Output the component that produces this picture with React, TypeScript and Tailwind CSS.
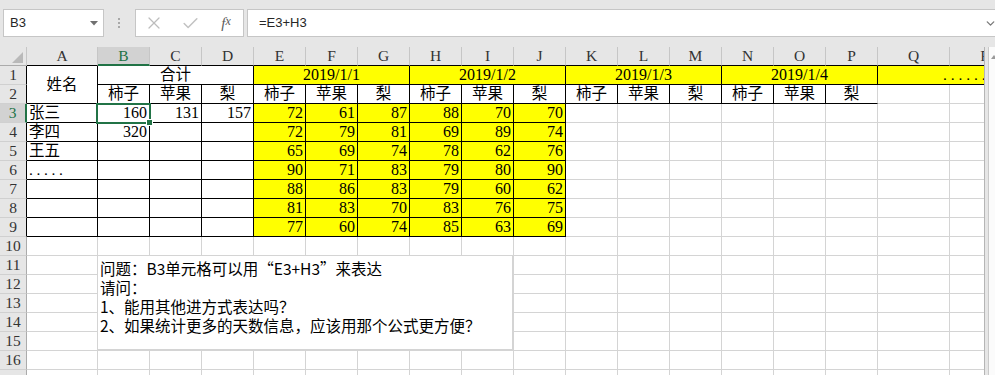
import { X, Check, ChevronDown } from 'lucide-react';
import clsx from 'clsx';

// Spreadsheet snapshot: formula bar + sheet with a merged-header fruit table

const COLS = ['A', 'B', 'C', 'D', 'E', 'F', 'G', 'H', 'I', 'J', 'K', 'L', 'M', 'N', 'O', 'P', 'Q', 'R'];
const FRUITS = ['柿子', '苹果', '梨'];
const DATES = ['2019/1/1', '2019/1/2', '2019/1/3', '2019/1/4'];
const NAMES = ['张三', '李四', '王五', '.....', '', '', ''];
const TOTALS: number[][] = [[160, 131, 157], [320], [], [], [], [], []];
const DAILY = [
    [72, 61, 87, 88, 70, 70],
    [72, 79, 81, 69, 89, 74],
    [65, 69, 74, 78, 62, 76],
    [90, 71, 83, 79, 80, 90],
    [88, 86, 83, 79, 60, 62],
    [81, 83, 70, 83, 76, 75],
    [77, 60, 74, 85, 63, 69],
];
const ROW_COUNT = 17;

interface Cell {
    text?: string | number;
    span?: 2 | 3;
    tall?: boolean;
    align?: 'left' | 'center' | 'right';
    yellow?: boolean;
    // numbers / dates are set a touch larger
    digits?: boolean;
    // black right / bottom border
    edgeR?: boolean;
    edgeB?: boolean;
    extra?: string;
}

function buildRow(r: number): Cell[] {
    if (r === 1) {
        return [
            { text: '姓名', tall: true, align: 'center', edgeR: true, edgeB: true },
            { text: '合计', span: 3, align: 'center', edgeR: true, edgeB: true },
            ...DATES.map((d): Cell => ({
                text: d,
                span: 3,
                align: 'center',
                yellow: true,
                digits: true,
                edgeR: true,
                edgeB: true,
            })),
            { text: '............', span: 2, yellow: true, edgeB: true, extra: 'pl-[65px] tracking-[3.9px]' },
        ];
    }
    if (r === 2) {
        const cells: Cell[] = [];
        for (let i = 0; i < 15; i++) {
            cells.push({ text: FRUITS[i % 3], align: 'center', edgeR: i < 14, edgeB: true });
        }
        cells.push({}, {});
        return cells;
    }
    if (r <= 9) {
        const i = r - 3;
        const cells: Cell[] = [
            {
                text: NAMES[i],
                align: 'left',
                edgeR: true,
                edgeB: true,
                extra: NAMES[i] === '.....' ? 'tracking-[3.6px]' : '',
            },
        ];
        for (let c = 0; c < 3; c++) {
            cells.push({ text: TOTALS[i][c], align: 'right', digits: true, edgeR: true, edgeB: true });
        }
        DAILY[i].forEach(v =>
            cells.push({ text: v, align: 'right', yellow: true, digits: true, edgeR: true, edgeB: true })
        );
        for (let c = 0; c < 8; c++) cells.push({});
        return cells;
    }
    return COLS.map(() => ({}));
}

function CellView({ cell }: { cell: Cell }) {
    return (
        <div
            className={clsx(
                'flex min-w-0 overflow-hidden whitespace-nowrap border-r border-b px-[2px] leading-[18px] text-black',
                cell.digits ? 'text-[16px]' : 'text-[15.5px]',
                cell.span === 3 && 'col-span-3',
                cell.span === 2 && 'col-span-2',
                cell.tall ? 'row-span-2 items-center' : 'items-end',
                cell.align === 'center' && 'justify-center',
                cell.align === 'right' && 'justify-end',
                cell.yellow ? 'bg-[#ffff00]' : 'bg-white',
                cell.edgeR ? 'border-r-black' : 'border-r-[#d4d4d4]',
                cell.edgeB ? 'border-b-black' : 'border-b-[#d4d4d4]',
                cell.extra
            )}
        >
            {cell.text}
        </div>
    );
}

function FormulaBar() {
    return (
        <div className="flex h-[47px] items-start bg-[#e6e6e6] pt-[9px] pl-[3px] font-['Liberation_Sans',sans-serif]">
            {/* Name box */}
            <div className="flex h-[28px] w-[101px] shrink-0 items-center justify-between border border-[#c6c6c6] bg-white pl-[6px] pr-[5px] text-[13px] text-[#262626]">
                <span>B3</span>
                <svg width="8" height="5" viewBox="0 0 8 5">
                    <polygon points="0,0 8,0 4,4.5" fill="#707070" />
                </svg>
            </div>

            {/* Grip dots */}
            <div className="ml-[14px] mt-[9px] flex shrink-0 flex-col gap-[2px]">
                <span className="h-[2px] w-[2px] bg-[#a8a8a8]" />
                <span className="h-[2px] w-[2px] bg-[#a8a8a8]" />
                <span className="h-[2px] w-[2px] bg-[#a8a8a8]" />
            </div>

            {/* Cancel / enter / fx */}
            <div className="ml-[15px] flex h-[28px] w-[109px] shrink-0 items-center border border-[#c6c6c6] bg-white">
                <div className="flex w-[35px] justify-center">
                    <X size={20} strokeWidth={1.5} color="#bdbdbd" />
                </div>
                <div className="flex w-[38px] justify-center">
                    <Check size={19} strokeWidth={1.9} color="#c2c2c2" />
                </div>
                <div className="flex w-[34px] justify-center font-['Liberation_Serif',serif] text-[15px] italic text-[#5a5a5a]">
                    f<span className="text-[12px] leading-[18px]">x</span>
                </div>
            </div>

            {/* Formula input */}
            <div className="ml-[3px] flex h-[28px] w-[760px] shrink-0 items-center justify-between border border-[#c6c6c6] bg-white pl-[11px] pr-[9px] text-[13px] text-[#262626]">
                <span>=E3+H3</span>
                <ChevronDown size={13} strokeWidth={2.5} color="#7a7a7a" />
            </div>
        </div>
    );
}

export default function App() {
    return (
        <div className="h-[375px] w-[995px] overflow-hidden bg-[#e6e6e6] font-['Liberation_Serif','Noto_Sans_CJK_SC',serif]">
            <FormulaBar />

            <div className="flex h-[328px]">
                {/* Sheet */}
                <div className="relative h-full w-[985px] shrink-0 overflow-hidden border-r border-[#b5b5b5]">
                    <div className="grid w-max auto-rows-[19px] grid-cols-[27px_71px_repeat(15,52px)_72px_72px]">
                        {/* Corner */}
                        <div className="relative border-r border-b border-r-[#c6c6c6] border-b-[#ababab] bg-[#e6e6e6]">
                            <svg className="absolute right-[3px] bottom-[2px]" width="11" height="11" viewBox="0 0 11 11">
                                <polygon points="11,0 11,11 0,11" fill="#b9b9b9" />
                            </svg>
                        </div>
                        {/* Column headers */}
                        {COLS.map(c => (
                            <div
                                key={c}
                                className={clsx(
                                    'flex items-center justify-center border-r border-r-[#c6c6c6] text-[15.5px] leading-[18px]',
                                    c === 'B'
                                        ? 'border-b-2 border-b-[#217346] bg-[#d2d2d2] text-[#217346]'
                                        : 'border-b border-b-black bg-[#e6e6e6] text-[#333]'
                                )}
                            >
                                {c}
                            </div>
                        ))}

                        {Array.from({ length: ROW_COUNT }, (_, k) => k + 1).map(r => [
                            <div
                                key={`h${r}`}
                                className={clsx(
                                    'flex items-center justify-center border-b border-b-[#d0d0d0] text-[15.5px] leading-[18px]',
                                    r === 3
                                        ? 'border-r-2 border-r-[#217346] bg-[#d2d2d2] text-[#217346]'
                                        : 'border-r bg-[#e6e6e6] text-[#333]',
                                    r !== 3 && (r <= 9 ? 'border-r-black' : 'border-r-[#ababab]')
                                )}
                            >
                                {r < ROW_COUNT ? r : ''}
                            </div>,
                            ...buildRow(r).map((cell, i) => <CellView key={`${r}-${i}`} cell={cell} />),
                        ])}
                    </div>

                    {/* Active cell B3 */}
                    <div className="absolute top-[56px] left-[96px] h-[21px] w-[55px] border-2 border-[#217346]" />
                    <div className="absolute top-[72px] left-[146px] h-[7px] w-[7px] border border-white bg-[#217346]" />

                    {/* Text box note */}
                    <div className="absolute top-[208px] left-[97px] h-[95px] w-[416px] border border-[#d4d4d4] bg-white pt-[3px] pl-[2px] font-['Noto_Sans_CJK_SC','Liberation_Serif',sans-serif] text-[15.5px] leading-[19px] text-black">
                        <div>问题：B3单元格可以用“E3+H3”来表达</div>
                        <div>请问：</div>
                        <div>1、能用其他进方式表达吗？</div>
                        <div>2、如果统计更多的天数信息，应该用那个公式更方便？</div>
                    </div>
                </div>

                {/* Vertical scrollbar */}
                <div className="ml-[3px] h-full flex-1 border-l border-[#c9c9c9] bg-[#fbfbfb] pt-[8px] pl-[2px]">
                    <svg width="6" height="4" viewBox="0 0 6 4">
                        <polygon points="0,4 6,4 3,0" fill="#9a9a9a" />
                    </svg>
                </div>
            </div>
        </div>
    );
}
